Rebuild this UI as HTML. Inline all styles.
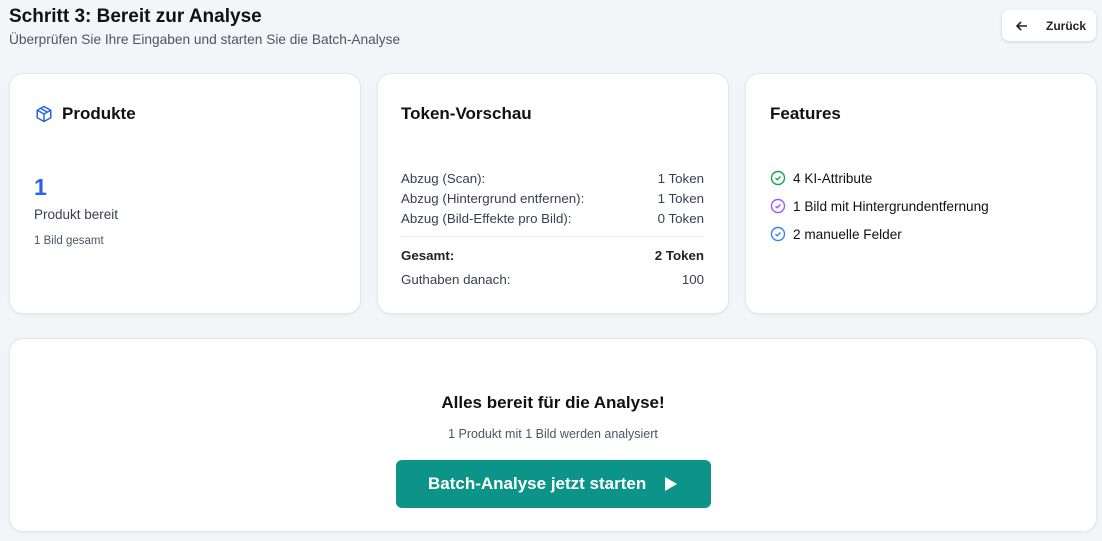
<!DOCTYPE html>
<html><head><meta charset="utf-8"><style>
*{box-sizing:border-box;margin:0;padding:0}
body{width:1102px;height:541px;background:#f3f5f9;font-family:"Liberation Sans",sans-serif;color:#111827;position:relative;overflow:hidden}
.abs{position:absolute}
.card{position:absolute;background:#fff;border:1px solid #e3e7ee;border-radius:14px;box-shadow:0 1px 3px rgba(0,0,0,.06)}
h1{position:absolute;left:9px;top:6px;font-size:19px;font-weight:bold;color:#111}
.sub{left:9px;top:32px;font-size:13.7px;color:#4b5563}
.ct{font-size:17px;font-weight:bold;color:#111}
.row{position:absolute;left:23px;right:24px;font-size:13.3px;color:#374151;display:flex;justify-content:space-between}
.f{position:absolute;left:24px;font-size:13.6px;color:#111;display:flex;align-items:center;gap:7px}
</style></head><body>
<h1>Schritt 3: Bereit zur Analyse</h1>
<div class="abs sub">Überprüfen Sie Ihre Eingaben und starten Sie die Batch-Analyse</div>
<div class="abs" style="left:1002px;top:10px;width:94px;height:31px;background:#fff;border-radius:7px;box-shadow:0 1px 3px rgba(0,0,0,.15);font-size:12px;font-weight:bold;color:#222">
<svg class="abs" style="left:13px;top:9px" width="14" height="14" viewBox="0 0 14 14" fill="none" stroke="#222" stroke-width="1.6"><path d="M12 7H2M6 3L2 7l4 4"/></svg>
<span class="abs" style="left:44px;top:9px">Zurück</span></div>

<div class="card" style="left:9px;top:73px;width:352px;height:241px">
<svg class="abs" style="left:25px;top:31px" width="18" height="18" viewBox="0 0 24 24" fill="none" stroke="#2563eb" stroke-width="2" stroke-linejoin="round"><path d="M12 2l9 5v10l-9 5-9-5V7z M3 7l9 5 9-5 M12 12v10 M7.5 4.5l9 5"/></svg>
<div class="abs ct" style="left:52px;top:30px">Produkte</div>
<div class="abs" style="left:24px;top:100px;font-size:23px;font-weight:bold;color:#2563eb">1</div>
<div class="abs" style="left:24px;top:133px;font-size:13.5px;color:#374151">Produkt bereit</div>
<div class="abs" style="left:24px;top:161px;font-size:11.5px;color:#4b5563">1 Bild gesamt</div>
</div>

<div class="card" style="left:377px;top:73px;width:352px;height:241px">
<div class="abs ct" style="left:23px;top:30px">Token-Vorschau</div>
<div class="row" style="top:97px"><span>Abzug (Scan):</span><span>1 Token</span></div>
<div class="row" style="top:117px"><span>Abzug (Hintergrund entfernen):</span><span>1 Token</span></div>
<div class="row" style="top:137px"><span>Abzug (Bild-Effekte pro Bild):</span><span>0 Token</span></div>
<div class="abs" style="left:23px;right:24px;top:162px;border-top:1px solid #e5e7eb"></div>
<div class="row" style="top:174px;font-weight:bold;color:#222"><span>Gesamt:</span><span>2 Token</span></div>
<div class="row" style="top:198px"><span>Guthaben danach:</span><span>100</span></div>
</div>

<div class="card" style="left:745px;top:73px;width:352px;height:241px">
<div class="abs ct" style="left:24px;top:30px">Features</div>
<div class="f" style="top:96px"><svg width="16" height="16" viewBox="0 0 16 16" fill="none" stroke="#16a34a" stroke-width="1.4"><circle cx="8" cy="8" r="6.5"/><path d="M5.5 8.2l1.7 1.6 3.3-3.3"/></svg>4 KI-Attribute</div>
<div class="f" style="top:124px"><svg width="16" height="16" viewBox="0 0 16 16" fill="none" stroke="#a855f7" stroke-width="1.4"><circle cx="8" cy="8" r="6.5"/><path d="M5.5 8.2l1.7 1.6 3.3-3.3"/></svg>1 Bild mit Hintergrundentfernung</div>
<div class="f" style="top:152px"><svg width="16" height="16" viewBox="0 0 16 16" fill="none" stroke="#3b82f6" stroke-width="1.4"><circle cx="8" cy="8" r="6.5"/><path d="M5.5 8.2l1.7 1.6 3.3-3.3"/></svg>2 manuelle Felder</div>
</div>

<div class="card" style="left:9px;top:338px;width:1088px;height:194px">
<div class="abs" style="left:0;right:0;top:54px;text-align:center;font-size:17px;font-weight:bold;color:#111">Alles bereit für die Analyse!</div>
<div class="abs" style="left:0;right:0;top:88px;text-align:center;font-size:12.5px;color:#4b5563">1 Produkt mit 1 Bild werden analysiert</div>
<div class="abs" style="left:386px;top:121px;width:315px;height:48px;background:#0d9488;border-radius:6px;color:#fff;font-size:17px;font-weight:bold">
<span class="abs" style="left:32px;top:14px">Batch-Analyse jetzt starten</span>
<svg class="abs" style="left:267px;top:15px" width="16" height="18" viewBox="0 0 16 18"><path d="M2 2l12 7-12 7z" fill="#fff"/></svg>
</div>
</div>
</body></html>
